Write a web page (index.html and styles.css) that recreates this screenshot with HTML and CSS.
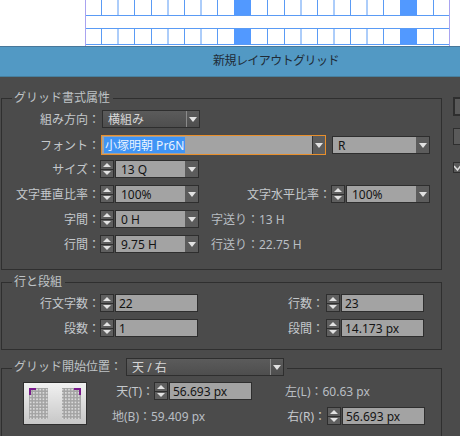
FILE: index.html
```html
<!DOCTYPE html>
<html lang="ja">
<head>
<meta charset="utf-8">
<title>新規レイアウトグリッド</title>
<link rel="stylesheet" href="styles.css">
</head>
<body>
<div class="doc">
  <svg class="doc-art" width="460" height="46" viewBox="0 0 460 46">
    <g fill="#5299ff">
      <rect x="234" y="0" width="17" height="15"/><rect x="400" y="0" width="17" height="15"/>
      <rect x="234" y="28" width="17" height="16"/><rect x="400" y="28" width="17" height="16"/>
    </g>
    <g fill="none" stroke="#5a9bf5" stroke-width="1">
      <path d="M85 15.500H449M85 28.500H449M85 44.500H449"/>
      <path d="M101.500 0V15M118 0V15M134.500 0V15M151.500 0V15M168 0V15M184.500 0V15M201 0V15M217.500 0V15M267.500 0V15M284.500 0V15M301 0V15M317.500 0V15M334 0V15M350.500 0V15M367 0V15M383.500 0V15M433.500 0V15"/>
      <path d="M101.500 28V44M118 28V44M134.500 28V44M151.500 28V44M168 28V44M184.500 28V44M201 28V44M217.500 28V44M267.500 28V44M284.500 28V44M301 28V44M317.500 28V44M334 28V44M350.500 28V44M367 28V44M383.500 28V44M433.500 28V44"/>
    </g>
    <path d="M85.500 0V46M449.500 0V46" stroke="#a9a3f0" fill="none"/>
  </svg>
</div>
<header class="titlebar">新規レイアウトグリッド</header>
<main class="dialog">
  <div class="form">
    <fieldset class="group group-a">
      <legend>グリッド書式属性</legend>
      <div class="row">
        <span class="lab">組み方向：</span>
        <div class="select dark w98"><span class="val">横組み</span><span class="arrow"></span></div>
      </div>
      <div class="row row-font">
        <span class="lab">フォント：</span>
        <div class="select focus w225"><span class="val"><span class="sel">小塚明朝 Pr6N</span></span><span class="arrow"></span></div>
        <div class="select w98 ml6"><span class="val">R</span><span class="arrow"></span></div>
      </div>
      <div class="row">
        <span class="lab">サイズ：</span>
        <span class="spin"><i></i><i></i></span>
        <div class="select w84"><span class="val">13 Q</span><span class="arrow"></span></div>
      </div>
      <div class="row">
        <span class="lab">文字垂直比率：</span>
        <span class="spin"><i></i><i></i></span>
        <div class="select w84"><span class="val">100%</span><span class="arrow"></span></div>
        <span class="lab lab-r">文字水平比率：</span>
        <span class="spin"><i></i><i></i></span>
        <div class="select w84"><span class="val">100%</span><span class="arrow"></span></div>
      </div>
      <div class="row">
        <span class="lab">字間：</span>
        <span class="spin"><i></i><i></i></span>
        <div class="select w84"><span class="val">0 H</span><span class="arrow"></span></div>
        <span class="note">字送り：13 H</span>
      </div>
      <div class="row">
        <span class="lab">行間：</span>
        <span class="spin"><i></i><i></i></span>
        <div class="select w84"><span class="val">9.75 H</span><span class="arrow"></span></div>
        <span class="note">行送り：22.75 H</span>
      </div>
    </fieldset>
    <fieldset class="group group-b">
      <legend>行と段組</legend>
      <div class="row">
        <span class="lab">行文字数：</span>
        <span class="spin"><i></i><i></i></span>
        <div class="input">22</div>
        <span class="lab lab-m">行数：</span>
        <span class="spin"><i></i><i></i></span>
        <div class="input">23</div>
      </div>
      <div class="row">
        <span class="lab">段数：</span>
        <span class="spin"><i></i><i></i></span>
        <div class="input">1</div>
        <span class="lab lab-m">段間：</span>
        <span class="spin"><i></i><i></i></span>
        <div class="input">14.173 px</div>
      </div>
    </fieldset>
    <fieldset class="group group-c">
      <legend class="legend-select">
        <span>グリッド開始位置：</span>
        <div class="select dark w158"><span class="val">天 / 右</span><span class="arrow"></span></div>
      </legend>
      <div class="start">
        <div class="preview">
          <svg width="64" height="43" viewBox="0 0 64 43">
            <defs>
              <pattern id="cell" x="6" y="6" width="3.200" height="3.200" patternUnits="userSpaceOnUse">
                <rect width="3.200" height="3.200" fill="#a3a3a3"/>
                <rect x="0.800" y="0.800" width="1.700" height="1.700" fill="#dadada"/>
              </pattern>
            </defs>
            <rect x="6" y="6" width="19" height="31" fill="url(#cell)"/>
            <rect x="39" y="6" width="19" height="31" fill="url(#cell)"/>
            <path d="M7 13V7H13M51 7H57V13" fill="none" stroke="#7a1a8c" stroke-width="2"/>
          </svg>
        </div>
        <div class="fields">
          <div class="row">
            <span class="lab lab-s">天(T)：</span>
            <span class="spin"><i></i><i></i></span>
            <div class="input">56.693 px</div>
            <span class="note note-l">左(L)：60.63 px</span>
          </div>
          <div class="row">
            <span class="note note-b">地(B)：59.409 px</span>
            <span class="lab lab-e">右(R)：</span>
            <span class="spin"><i></i><i></i></span>
            <div class="input">56.693 px</div>
          </div>
        </div>
      </div>
    </fieldset>
  </div>
  <aside class="side">
    <span class="btn btn-1"></span>
    <span class="btn btn-2"></span>
    <span class="check">
      <svg width="9" height="9" viewBox="0 0 9 9"><path d="M0 3L3.500 7L9 0" fill="none" stroke="#dddddd" stroke-width="1.500"/></svg>
    </span>
  </aside>
</main>
</body>
</html>
```
FILE: styles.css
```css
* { box-sizing: border-box; }
html, body { margin: 0; padding: 0; }
body {
  width: 460px;
  height: 436px;
  overflow: hidden;
  background: #4b4b4b;
  color: #c4c8cc;
  font: 12px/18px "Noto Sans", "Noto Sans CJK JP", sans-serif;
}
.doc { height: 46px; background: #fff; }
.doc-art { display: block; }
.titlebar {
  height: 31px;
  background: #5299c4;
  border-top: 1px solid #47779a;
  border-bottom: 1px solid #47809f;
  color: #1f2b36;
  font-size: 12px;
  line-height: 28px;
  letter-spacing: -0.55px;
  padding-left: 213px;
}
.dialog { display: flex; height: 359px; overflow: hidden; }
.form { width: 442px; padding: 12px 0 0 1px; flex: none; }
.group {
  margin: 0;
  padding: 0;
  min-width: 0;
  width: 441px;
  border: 1px solid #2f2f2f;
}
.group legend {
  margin-left: 10px;
  padding: 0 3px 0 2px;
  color: #bfc3c6;
  line-height: 18px;
}
.group-a { height: 181px; padding-top: 3px; }
.group-b { height: 77px; margin-top: 3px; padding-top: 3px; }
.group-c { height: 80px; margin-top: 8px; padding-top: 4px; }
.group .legend-select { display: flex; align-items: flex-start; height: 20px; }
.row { display: flex; align-items: center; height: 18px; margin-bottom: 7px; }
.row-font { margin-top: 8px; margin-bottom: 6px; }
.lab { width: 98px; flex: none; text-align: right; white-space: nowrap; padding-top: 2px; }
.lab-r { width: 132px; }
.lab-m { width: 126px; margin-right: 2px; }
.lab-s { width: 42px; }
.lab-e { width: 54px; margin-right: 1px; }
.spin {
  display: flex;
  flex-direction: column;
  flex: none;
  width: 14px;
  height: 18px;
  margin-right: 1px;
  background: #2e2e2e;
  border: 1px solid #2e2e2e;
  gap: 1px;
}
.spin i {
  flex: 1;
  background: #5f5f5f;
  display: flex;
  align-items: center;
  justify-content: center;
}
.spin i::before {
  content: "";
  width: 0;
  height: 0;
  border-left: 4px solid transparent;
  border-right: 4px solid transparent;
  border-bottom: 4px solid #e2e2e2;
}
.spin i:last-child::before {
  border-bottom: 0;
  border-top: 4px solid #e2e2e2;
}
.select {
  display: flex;
  flex: none;
  height: 18px;
  background: #a3a3a3;
  border: 1px solid #2e2e2e;
  color: #141414;
}
.val { flex: 1; padding-left: 5px; line-height: 18px; white-space: nowrap; overflow: hidden; }
.arrow {
  flex: none;
  width: 13px;
  background: #5c5c5c;
  display: flex;
  align-items: center;
  justify-content: center;
}
.arrow::before {
  content: "";
  width: 0;
  height: 0;
  border-left: 4px solid transparent;
  border-right: 4px solid transparent;
  border-top: 5px solid #e2e2e2;
}
.dark { background: linear-gradient(#5b5b5b, #4e4e4e); color: #d6d6d6; }
.dark .arrow { background: transparent; border-left: 1px solid #8a8a8a; }
.focus { height: 20px; border: 1px solid #e88f2c; }
.focus .val { padding-left: 2px; line-height: 18px; }
.focus .arrow { border-left: 1px solid #333; }
.sel { display: inline-block; height: 16px; line-height: 18px; background: #3f94f5; color: #eaf3ff; padding: 0 1px; margin-top: 1px; vertical-align: top; }
.w84 { width: 84px; }
.w98 { width: 98px; margin-left: 2px; }
.w158 { width: 158px; margin-left: 4px; }
.w225 { width: 225px; margin-left: 1px; }
.ml6 { margin-left: 6px; }
.input {
  flex: none;
  width: 83px;
  height: 18px;
  background: #a3a3a3;
  border: 1px solid #2e2e2e;
  color: #141414;
  padding-left: 3px;
  line-height: 18px;
  white-space: nowrap;
  overflow: hidden;
}
.note { margin-left: 12px; color: #b9bec3; white-space: nowrap; padding-top: 2px; }
.note-l { margin-left: 33px; }
.note-b { margin-left: 0; width: 160px; }
.start { display: flex; padding-left: 21px; }
.preview {
  flex: none;
  width: 64px;
  height: 43px;
  background: linear-gradient(#f2f2f2, #c6c6c6);
  outline: 1px solid #2e2e2e;
  outline-offset: -1px;
}
.preview svg { display: block; }
.fields { margin-left: 25px; flex: 1; }
.side { flex: 1; display: flex; flex-direction: column; padding: 20px 0 0 11px; }
.btn, .check { display: block; border: 1px solid #2e2e2e; background: #5a5a5a; width: 20px; }
.btn-1 { height: 19px; border-width: 2px; }
.btn-2 { height: 17px; margin-top: 12px; }
.check { height: 11px; margin-top: 17px; line-height: 0; }
.check svg { display: block; }
```
